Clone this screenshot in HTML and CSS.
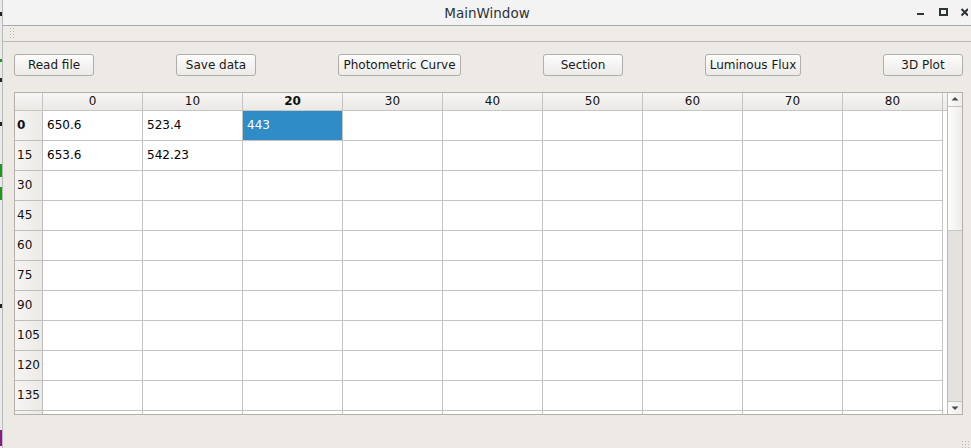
FILE: index.html
```html
<!DOCTYPE html>
<html>
<head>
<meta charset="utf-8">
<title>MainWindow</title>
<link rel="stylesheet" href="styles.css">
</head>
<body>
<div class="edge">
  <i class="mk dk m1"></i><i class="mk gr m2"></i><i class="mk dk m3"></i><i class="mk dk m4"></i><i class="mk gr m5"></i><i class="mk gr m6"></i><i class="mk dk m7"></i><i class="mk pu m8"></i>
</div>
<div class="window">
  <div class="titlebar">
    <div></div>
    <div class="title">MainWindow</div>
    <div class="controls">
      <svg width="60" height="25" viewBox="0 0 60 25">
        <rect x="9" y="13" width="7" height="2" fill="#2e3436"/>
        <rect x="32" y="9" width="7" height="6" fill="none" stroke="#2e3436" stroke-width="2"/>
        <path d="M53.5 9 L60 15.5 M60 9 L53.5 15.5" stroke="#2e3436" stroke-width="2" fill="none"/>
      </svg>
    </div>
  </div>
  <div class="toolbar"><div class="handle"></div></div>
  <div class="content">
    <div class="buttons">
      <button class="btn w80">Read file</button>
      <button class="btn w80">Save data</button>
      <button class="btn w122">Photometric Curve</button>
      <button class="btn w80">Section</button>
      <button class="btn w95">Luminous Flux</button>
      <button class="btn w80">3D Plot</button>
    </div>
    <div class="table">
      <div class="grid">
        <div class="hc corner"></div><div class="hc">0</div><div class="hc">10</div><div class="hc b">20</div><div class="hc">30</div><div class="hc">40</div><div class="hc">50</div><div class="hc">60</div><div class="hc">70</div><div class="hc">80</div><div class="hc fill"></div>
        <div class="rh b">0</div><div class="c">650.6</div><div class="c">523.4</div><div class="c sel">443</div><div class="c"></div><div class="c"></div><div class="c"></div><div class="c"></div><div class="c"></div><div class="c"></div><div class="f"></div>
        <div class="rh">15</div><div class="c">653.6</div><div class="c">542.23</div><div class="c"></div><div class="c"></div><div class="c"></div><div class="c"></div><div class="c"></div><div class="c"></div><div class="c"></div><div class="f"></div>
        <div class="rh">30</div><div class="c"></div><div class="c"></div><div class="c"></div><div class="c"></div><div class="c"></div><div class="c"></div><div class="c"></div><div class="c"></div><div class="c"></div><div class="f"></div>
        <div class="rh">45</div><div class="c"></div><div class="c"></div><div class="c"></div><div class="c"></div><div class="c"></div><div class="c"></div><div class="c"></div><div class="c"></div><div class="c"></div><div class="f"></div>
        <div class="rh">60</div><div class="c"></div><div class="c"></div><div class="c"></div><div class="c"></div><div class="c"></div><div class="c"></div><div class="c"></div><div class="c"></div><div class="c"></div><div class="f"></div>
        <div class="rh">75</div><div class="c"></div><div class="c"></div><div class="c"></div><div class="c"></div><div class="c"></div><div class="c"></div><div class="c"></div><div class="c"></div><div class="c"></div><div class="f"></div>
        <div class="rh">90</div><div class="c"></div><div class="c"></div><div class="c"></div><div class="c"></div><div class="c"></div><div class="c"></div><div class="c"></div><div class="c"></div><div class="c"></div><div class="f"></div>
        <div class="rh">105</div><div class="c"></div><div class="c"></div><div class="c"></div><div class="c"></div><div class="c"></div><div class="c"></div><div class="c"></div><div class="c"></div><div class="c"></div><div class="f"></div>
        <div class="rh">120</div><div class="c"></div><div class="c"></div><div class="c"></div><div class="c"></div><div class="c"></div><div class="c"></div><div class="c"></div><div class="c"></div><div class="c"></div><div class="f"></div>
        <div class="rh">135</div><div class="c"></div><div class="c"></div><div class="c"></div><div class="c"></div><div class="c"></div><div class="c"></div><div class="c"></div><div class="c"></div><div class="c"></div><div class="f"></div>
        <div class="rh part"></div><div class="c part"></div><div class="c part"></div><div class="c part"></div><div class="c part"></div><div class="c part"></div><div class="c part"></div><div class="c part"></div><div class="c part"></div><div class="c part"></div><div class="f"></div>
      </div>
      <div class="vscroll">
        <div class="arrow up"><svg width="14" height="13" viewBox="0 0 14 13"><path d="M3.5 7.5 L7 4 L10.5 7.5 Z" fill="#4a4a4a"/></svg></div>
        <div class="handlebar"></div>
        <div class="trough"></div>
        <div class="arrow down"><svg width="14" height="13" viewBox="0 0 14 13"><path d="M3.5 4.5 L7 8 L10.5 4.5 Z" fill="#4a4a4a"/></svg></div>
      </div>
    </div>
    <div class="grip"></div>
  </div>
</div>
</body>
</html>
```

FILE: styles.css
```css
html, body {
  margin: 0;
  padding: 0;
}
body {
  width: 971px;
  height: 448px;
  overflow: hidden;
  display: flex;
  font-family: "DejaVu Sans", "Liberation Sans", sans-serif;
  font-size: 12px;
  color: #000;
  background: #edeae6;
}
.edge {
  width: 2px;
  flex: none;
  background: #e9e9e9;
  display: flex;
  flex-direction: column;
}
.mk { display: block; width: 2px; }
.dk { background: #222; }
.gr { background: #1a9a1a; }
.pu { background: #8a1a8a; }
.m1 { margin-top: 12px; height: 4px; }
.m2 { margin-top: 43px; height: 3px; }
.m3 { margin-top: 16px; height: 4px; }
.m4 { margin-top: 40px; height: 4px; }
.m5 { margin-top: 38px; height: 13px; }
.m6 { margin-top: 10px; height: 13px; }
.m7 { margin-top: 104px; height: 4px; }
.m8 { margin-top: 122px; height: 16px; }

.window {
  flex: 1;
  border-left: 1px solid #b9b9b9;
  display: flex;
  flex-direction: column;
  background: #edeae6;
}
.titlebar {
  height: 25px;
  flex: none;
  background: #f3f3f3;
  border-bottom: 1px solid #a9a9a9;
  display: grid;
  grid-template-columns: 1fr auto 1fr;
  align-items: center;
}
.title {
  font-size: 13.5px;
  color: #2e3436;
  padding-top: 1px;
}
.controls {
  display: flex;
  justify-content: flex-end;
  padding-right: 3px;
}
.controls svg { display: block; }

.toolbar {
  height: 15px;
  flex: none;
  background: #efece8;
  border-bottom: 1px solid #bcb9b4;
  display: flex;
  align-items: center;
  padding-left: 6px;
}
.handle {
  width: 5px;
  height: 13px;
  background-image: radial-gradient(circle, #b7b4ae 0.6px, transparent 0.8px);
  background-size: 3px 3px;
}

.content {
  flex: 1;
  padding: 12px 8px 0 11px;
  display: flex;
  flex-direction: column;
}
.buttons {
  display: flex;
  justify-content: space-between;
  height: 22px;
}
.btn {
  box-sizing: border-box;
  height: 22px;
  margin: 0;
  padding: 0;
  border: 1px solid #b1aea9;
  border-radius: 3px;
  background: linear-gradient(#fcfcfc, #ecebe8);
  font-family: "DejaVu Sans", "Liberation Sans", sans-serif;
  font-size: 12px;
  color: #1a1a1a;
  text-align: center;
}
.w80 { width: 80px; }
.w95 { width: 96px; }
.w122 { width: 123px; }

.table {
  margin-top: 16px;
  box-sizing: border-box;
  width: 949px;
  height: 323px;
  border: 1px solid #b4b1ad;
  background: #fff;
  display: flex;
}
.grid {
  flex: 1;
  display: grid;
  grid-template-columns: 28px repeat(9, 100px) 1fr;
  grid-template-rows: 18px repeat(10, 30px) 3px;
  overflow: hidden;
}
.grid > div {
  box-sizing: border-box;
  overflow: hidden;
  white-space: nowrap;
}
.hc {
  background: linear-gradient(#f7f6f4, #ebe9e5);
  border-right: 1px solid #c7c5c1;
  border-bottom: 1px solid #c7c5c1;
  text-align: center;
  line-height: 17px;
  color: #111;
}
.hc.fill { border-right: none; }
.rh {
  background: linear-gradient(90deg, #f6f5f3, #eceae6);
  border-right: 1px solid #c0beba;
  border-bottom: 1px solid #c0beba;
  padding-left: 2px;
  line-height: 29px;
  color: #111;
}
.b { font-weight: bold; }
.c {
  border-right: 1px solid #c3c3c3;
  border-bottom: 1px solid #c3c3c3;
  padding-left: 4px;
  line-height: 29px;
}
.c.sel {
  background: #308cc6;
  color: #fff;
  border-right-color: #c3c3c3;
}
.part { border-bottom: none; }
.f { background: #fff; }

.vscroll {
  width: 15px;
  flex: none;
  box-sizing: border-box;
  border-left: 1px solid #bdbab6;
  display: flex;
  flex-direction: column;
  background: #e4e2df;
}
.arrow {
  height: 14px;
  flex: none;
  box-sizing: border-box;
  background: linear-gradient(90deg, #fbfbfa, #efedea);
}
.arrow svg { display: block; }
.arrow.up { border-bottom: 1px solid #c4c2be; }
.arrow.down { border-top: 1px solid #c4c2be; height: 13px; }
.handlebar {
  height: 123px;
  flex: none;
  background: linear-gradient(90deg, #fdfdfc, #efedea);
  border-bottom: 1px solid #c9c7c3;
}
.trough {
  flex: 1;
  background: #e4e2de;
}
.grip {
  align-self: flex-end;
  margin-top: auto;
  margin-right: -8px;
  width: 10px;
  height: 8px;
  background-image: radial-gradient(circle, #bdb9b3 0.6px, transparent 0.8px);
  background-size: 3px 3px;
}
```
